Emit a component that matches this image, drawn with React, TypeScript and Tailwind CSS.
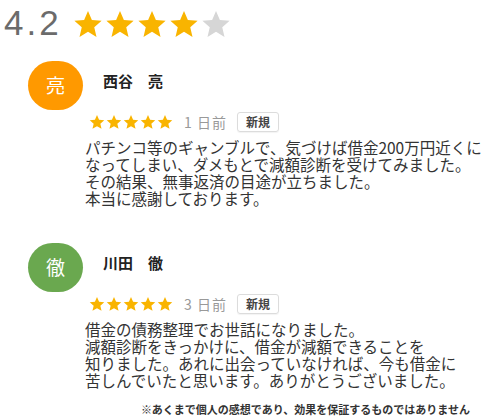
import React from "react";

const jp = { fontFamily: '"Noto Sans CJK JP", "Noto Sans", sans-serif' };

function Star({ size, color }: { size: number; color: string }) {
  return (
    <svg width={size} height={size} viewBox="0 0 24 24" className="shrink-0">
      <path
        d="M12 1.5l3.1 7.2 7.8.7-5.9 5.2 1.8 7.7L12 18.2l-6.8 4.1 1.8-7.7-5.9-5.2 7.8-.7z"
        fill={color}
      />
    </svg>
  );
}

type Review = {
  initial: string;
  color: string;
  name: string;
  when: string;
  lines: string[];
};

const reviews: Review[] = [
  {
    initial: "亮",
    color: "bg-[#ff9900]",
    name: "西谷　亮",
    when: "1 日前",
    lines: [
      "パチンコ等のギャンブルで、気づけば借金200万円近くに",
      "なってしまい、ダメもとで減額診断を受けてみました。",
      "その結果、無事返済の目途が立ちました。",
      "本当に感謝しております。",
    ],
  },
  {
    initial: "徹",
    color: "bg-[#6aa84f]",
    name: "川田　徹",
    when: "3 日前",
    lines: [
      "借金の債務整理でお世話になりました。",
      "減額診断をきっかけに、借金が減額できることを",
      "知りました。あれに出会っていなければ、今も借金に",
      "苦しんでいたと思います。ありがとうございました。",
    ],
  },
];

function ReviewCard({ r }: { r: Review }) {
  return (
    <div className="flex flex-col">
      {/* avatar + name */}
      <div className="flex items-start pl-[28px] h-[49px]">
        <div
          className={`w-[55px] h-[49px] rounded-full ${r.color} flex items-center justify-center text-white text-[19px]`}
          style={jp}
        >
          {r.initial}
        </div>
        <div
          className="ml-[20px] mt-[12px] text-[15px] leading-[16px] font-bold text-[#222] whitespace-nowrap"
          style={jp}
        >
          {r.name}
        </div>
      </div>

      {/* stars + date + badge */}
      <div className="flex items-center pl-[89px] mt-[2px] h-[20px]">
        <div className="flex gap-[1px]">
          {[0, 1, 2, 3, 4].map((i) => (
            <Star key={i} size={16} color="#f9b400" />
          ))}
        </div>
        <span
          className="ml-[11px] text-[14px] tracking-[1px] text-[#999] whitespace-nowrap"
          style={jp}
        >
          {r.when}
        </span>
        <span
          className="ml-[10px] px-[8px] h-[20px] flex items-center border border-[#dcdcdc] rounded-[3px] text-[12px] font-bold text-[#444] shadow-[0_1px_1px_rgba(0,0,0,0.05)]"
          style={jp}
        >
          新規
        </span>
      </div>

      {/* body */}
      <div className="pl-[85px] mt-[7px] text-[15.5px] leading-[17px] text-[#333]" style={jp}>
        {r.lines.map((l, i) => (
          <div key={i} className="whitespace-nowrap">
            {l}
          </div>
        ))}
      </div>
    </div>
  );
}

export default function App() {
  return (
    <div className="w-[487px] h-[417px] bg-white overflow-hidden">
      {/* overall rating */}
      <div className="flex items-start pl-[4px] pt-[5px] h-[44px]">
        <span
          className="text-[35px] leading-[35px] tracking-[3px] text-[#6b6b6b]"
          style={{ fontFamily: '"Liberation Sans", Arial, sans-serif' }}
        >
          4.2
        </span>
        <div className="flex gap-[2px] ml-[11px] mt-[4px]">
          {[0, 1, 2, 3].map((i) => (
            <Star key={i} size={30} color="#f9b400" />
          ))}
          <Star size={30} color="#d6d6d6" />
        </div>
      </div>

      <div className="mt-[17px] flex flex-col gap-[36px]">
        {reviews.map((r) => (
          <ReviewCard key={r.name} r={r} />
        ))}
      </div>

      <div className="flex justify-end pr-[17px] mt-[13px]">
        <span className="text-[11px] leading-[14px] font-bold text-[#333] whitespace-nowrap" style={jp}>
          ※あくまで個人の感想であり、効果を保証するものではありません
        </span>
      </div>
    </div>
  );
}
